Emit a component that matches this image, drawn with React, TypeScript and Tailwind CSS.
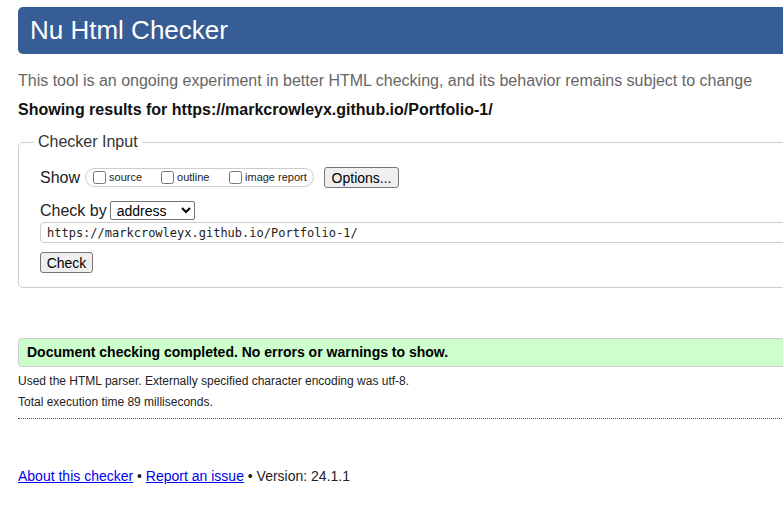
export default function App() {
  return (
    <div className="w-full overflow-hidden bg-white text-[#222] font-['Liberation_Sans',Arial,sans-serif]">
      <div className="w-[1100px] pl-[18px] pt-[7px] pb-[30px]">
        <h1 className="h-[47px] flex items-center pl-[12px] bg-[#365d95] text-white text-[26px] rounded-l-[5px]">
          Nu Html Checker
        </h1>
        <p className="mt-[18px] text-[16px] leading-[18px] text-[#666]">
          This tool is an ongoing experiment in better HTML checking, and its behavior remains subject to change
        </p>
        <p className="mt-[11px] text-[16px] leading-[18px] font-bold text-[#111]">
          Showing results for https://markcrowleyx.github.io/Portfolio-1/
        </p>

        <fieldset className="mt-[14px] w-[1000px] border border-[#ccc] rounded-l-[5px] pl-[15px] pb-[12px]">
          <legend className="px-[4px] text-[16px] leading-[18px] text-[#333]">Checker Input</legend>
          <div className="pl-[6px]">
            <div className="mt-[16px] h-[21px] flex items-center">
              <span className="text-[16px] leading-[18px] mr-[5px]">Show</span>
              <div className="h-[19px] w-[229px] flex items-center border border-[#ccc] rounded-full pl-[7px] text-[11px]">
                <label className="flex items-center w-[68px]">
                  <input type="checkbox" className="m-0 w-[13px] h-[13px] mr-[3px]" />
                  <span>source</span>
                </label>
                <label className="flex items-center w-[68px]">
                  <input type="checkbox" className="m-0 w-[13px] h-[13px] mr-[3px]" />
                  <span>outline</span>
                </label>
                <label className="flex items-center">
                  <input type="checkbox" className="m-0 w-[13px] h-[13px] mr-[3px]" />
                  <span>image report</span>
                </label>
              </div>
              <button className="ml-[10px] h-[21px] w-[75px] bg-[#efefef] border border-[#767676] rounded-[3px] text-[14px] text-black">
                Options...
              </button>
            </div>

            <div className="mt-[12px] h-[21px] flex items-center">
              <span className="text-[16px] leading-[18px] mr-[3px]">Check by</span>
              <select
                defaultValue="address"
                className="h-[19px] w-[85px] border border-[#767676] rounded-[2px] bg-white text-[14px] text-black pl-[2px]"
              >
                <option value="address">address</option>
                <option value="upload">file upload</option>
                <option value="textarea">text input</option>
              </select>
            </div>

            <div className="mt-[1px] h-[21px] flex items-center border border-[#ccc] rounded-l-[4px] pl-[6px] font-['DejaVu_Sans_Mono',monospace] text-[12px] text-[#222]">
              https://markcrowleyx.github.io/Portfolio-1/
            </div>

            <button className="mt-[9px] h-[21px] w-[53px] bg-[#efefef] border border-[#767676] rounded-[3px] text-[14px] text-black">
              Check
            </button>
          </div>
        </fieldset>

        <div className="mt-[50px] h-[29px] flex items-center pl-[8px] bg-[#ccffcc] border border-[#ccc] rounded-l-[4px] text-[14px] font-bold text-black">
          Document checking completed. No errors or warnings to show.
        </div>
        <p className="mt-[7px] text-[12px] leading-[14px] text-[#222]">
          Used the HTML parser. Externally specified character encoding was utf-8.
        </p>
        <p className="mt-[7px] text-[12px] leading-[14px] text-[#222]">Total execution time 89 milliseconds.</p>
        <div className="mt-[9px] border-t border-dotted border-[#555]" />

        <p className="mt-[49px] text-[14px] leading-[16px] text-[#222]">
          <a href="#" className="text-[#0000ee] underline">About this checker</a>
          {" • "}
          <a href="#" className="text-[#0000ee] underline">Report an issue</a>
          {" • Version: 24.1.1"}
        </p>
      </div>
    </div>
  );
}
